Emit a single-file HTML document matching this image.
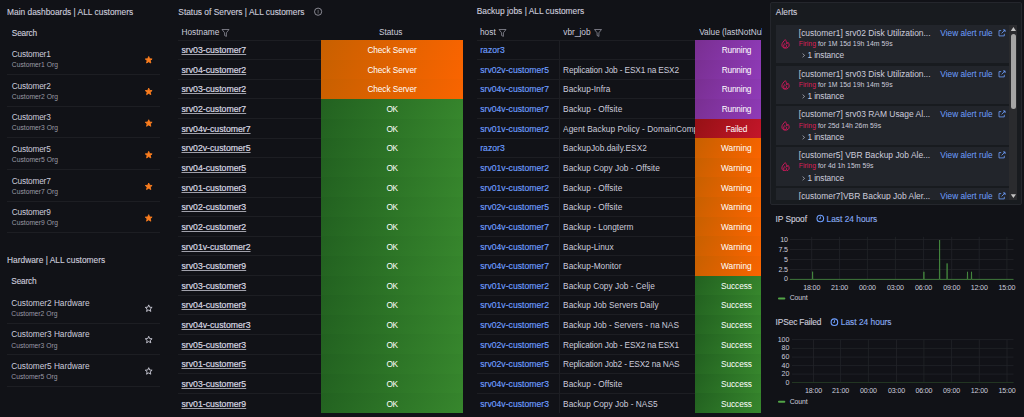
<!DOCTYPE html><html><head><meta charset="utf-8"><style>
*{margin:0;padding:0;box-sizing:border-box}
html,body{width:1024px;height:417px;overflow:hidden;background:#111217;font-family:"Liberation Sans",sans-serif;color:#ccccdc}
.a{position:absolute;white-space:nowrap}
.ttl{font-size:8.4px;line-height:10px;color:#ccccdc;-webkit-text-stroke:0.12px #ccccdc}
.hr{position:absolute;height:1px;background:#1d1e23}
.li{font-size:8.3px;letter-spacing:-0.2px;line-height:10px;color:#ccccdc}
.lo{font-size:6.75px;line-height:10px;color:#9a9aa6}
.hn{font-size:8.7px;line-height:10px;color:#d8d8e2;-webkit-text-stroke:0.2px #d8d8e2;text-decoration:underline;text-decoration-color:#a0a0aa;text-decoration-thickness:0.8px;text-underline-offset:0.5px}
.hd{font-size:8.3px;line-height:10px;color:#ccccdc}
.cell{position:absolute;color:#fff;font-size:8.3px;letter-spacing:-0.12px;line-height:10px;white-space:nowrap}
.tx{font-size:8.3px;letter-spacing:-0.18px;line-height:10px;color:#ccccdc}
.ax{font-size:7.1px;letter-spacing:-0.15px;line-height:10px;color:#ccccdc}
.lnk{color:#6e9fff}
svg.a{left:0;top:0}
</style></head><body>
<div class="a ttl" style="left:7.00px;top:6.70px;">Main dashboards | ALL customers</div>
<div class="a li" style="left:11.80px;top:28.40px;-webkit-text-stroke:0.12px #ccccdc">Search</div>
<div class="a li" style="left:11.80px;top:49.20px;">Customer1</div>
<div class="a lo" style="left:11.80px;top:60.20px;">Customer1 Org</div>
<div class="hr" style="left:7.40px;top:74.10px;width:152.20px;background:#1d1e23"></div>
<div class="a li" style="left:11.80px;top:80.83px;">Customer2</div>
<div class="a lo" style="left:11.80px;top:91.83px;">Customer2 Org</div>
<div class="hr" style="left:7.40px;top:105.73px;width:152.20px;background:#1d1e23"></div>
<div class="a li" style="left:11.80px;top:112.46px;">Customer3</div>
<div class="a lo" style="left:11.80px;top:123.46px;">Customer3 Org</div>
<div class="hr" style="left:7.40px;top:137.36px;width:152.20px;background:#1d1e23"></div>
<div class="a li" style="left:11.80px;top:144.09px;">Customer5</div>
<div class="a lo" style="left:11.80px;top:155.09px;">Customer5 Org</div>
<div class="hr" style="left:7.40px;top:168.99px;width:152.20px;background:#1d1e23"></div>
<div class="a li" style="left:11.80px;top:175.72px;">Customer7</div>
<div class="a lo" style="left:11.80px;top:186.72px;">Customer7 Org</div>
<div class="hr" style="left:7.40px;top:200.62px;width:152.20px;background:#1d1e23"></div>
<div class="a li" style="left:11.80px;top:207.35px;">Customer9</div>
<div class="a lo" style="left:11.80px;top:218.35px;">Customer9 Org</div>
<div class="hr" style="left:7.40px;top:232.25px;width:152.20px;background:#1d1e23"></div>
<div class="a ttl" style="left:7.00px;top:254.70px;">Hardware | ALL customers</div>
<div class="a li" style="left:11.30px;top:276.40px;-webkit-text-stroke:0.12px #ccccdc">Search</div>
<div class="a li" style="left:11.30px;top:297.90px;letter-spacing:-0.03px">Customer2 Hardware</div>
<div class="a lo" style="left:11.30px;top:309.10px;">Customer2 Org</div>
<div class="hr" style="left:7.40px;top:323.00px;width:152.20px;background:#1d1e23"></div>
<div class="a li" style="left:11.30px;top:329.30px;letter-spacing:-0.03px">Customer3 Hardware</div>
<div class="a lo" style="left:11.30px;top:340.50px;">Customer3 Org</div>
<div class="hr" style="left:7.40px;top:354.40px;width:152.20px;background:#1d1e23"></div>
<div class="a li" style="left:11.30px;top:360.70px;letter-spacing:-0.03px">Customer5 Hardware</div>
<div class="a lo" style="left:11.30px;top:371.90px;">Customer5 Org</div>
<div class="hr" style="left:7.40px;top:385.80px;width:152.20px;background:#1d1e23"></div>
<div class="a ttl" style="left:178.30px;top:6.60px;">Status of Servers | ALL customers</div>
<div class="a hd" style="left:181.50px;top:27.20px;">Hostname</div>
<div class="a hd" style="left:378.90px;top:27.20px;">Status</div>
<div class="hr" style="left:178.00px;top:39.50px;width:143.00px;background:#1d1e23"></div>
<div class="a hn" style="left:181.50px;top:45.22px;">srv03-customer7</div>
<div class="a" style="left:321px;top:40.00px;width:142px;height:19.68px;background:linear-gradient(120deg,#c76000,#fa6400)"></div>
<div class="cell" style="left:321px;width:142px;text-align:center;top:45.22px;letter-spacing:-0.09px">Check Server</div>
<div class="a hn" style="left:181.50px;top:64.85px;">srv04-customer2</div>
<div class="hr" style="left:178.00px;top:59.13px;width:143.00px;background:#1d1e23"></div>
<div class="a" style="left:321px;top:59.63px;width:142px;height:19.68px;background:linear-gradient(120deg,#c76000,#fa6400)"></div>
<div class="cell" style="left:321px;width:142px;text-align:center;top:64.85px;letter-spacing:-0.09px">Check Server</div>
<div class="a hn" style="left:181.50px;top:84.48px;">srv03-customer2</div>
<div class="hr" style="left:178.00px;top:78.76px;width:143.00px;background:#1d1e23"></div>
<div class="a" style="left:321px;top:79.26px;width:142px;height:19.68px;background:linear-gradient(120deg,#c76000,#fa6400)"></div>
<div class="cell" style="left:321px;width:142px;text-align:center;top:84.48px;letter-spacing:-0.09px">Check Server</div>
<div class="a hn" style="left:181.50px;top:104.11px;">srv02-customer7</div>
<div class="hr" style="left:178.00px;top:98.39px;width:143.00px;background:#1d1e23"></div>
<div class="a" style="left:321px;top:98.89px;width:142px;height:19.68px;background:linear-gradient(120deg,#226120,#37872d)"></div>
<div class="cell" style="left:321px;width:142px;text-align:center;top:104.11px;letter-spacing:-0.55px">OK</div>
<div class="a hn" style="left:181.50px;top:123.74px;">srv04v-customer7</div>
<div class="hr" style="left:178.00px;top:118.03px;width:143.00px;background:#1d1e23"></div>
<div class="a" style="left:321px;top:118.53px;width:142px;height:19.68px;background:linear-gradient(120deg,#226120,#37872d)"></div>
<div class="cell" style="left:321px;width:142px;text-align:center;top:123.74px;letter-spacing:-0.55px">OK</div>
<div class="a hn" style="left:181.50px;top:143.37px;">srv02v-customer5</div>
<div class="hr" style="left:178.00px;top:137.66px;width:143.00px;background:#1d1e23"></div>
<div class="a" style="left:321px;top:138.16px;width:142px;height:19.68px;background:linear-gradient(120deg,#226120,#37872d)"></div>
<div class="cell" style="left:321px;width:142px;text-align:center;top:143.37px;letter-spacing:-0.55px">OK</div>
<div class="a hn" style="left:181.50px;top:163.01px;">srv04-customer5</div>
<div class="hr" style="left:178.00px;top:157.29px;width:143.00px;background:#1d1e23"></div>
<div class="a" style="left:321px;top:157.79px;width:142px;height:19.68px;background:linear-gradient(120deg,#226120,#37872d)"></div>
<div class="cell" style="left:321px;width:142px;text-align:center;top:163.01px;letter-spacing:-0.55px">OK</div>
<div class="a hn" style="left:181.50px;top:182.64px;">srv01-customer3</div>
<div class="hr" style="left:178.00px;top:176.92px;width:143.00px;background:#1d1e23"></div>
<div class="a" style="left:321px;top:177.42px;width:142px;height:19.68px;background:linear-gradient(120deg,#226120,#37872d)"></div>
<div class="cell" style="left:321px;width:142px;text-align:center;top:182.64px;letter-spacing:-0.55px">OK</div>
<div class="a hn" style="left:181.50px;top:202.27px;">srv02-customer3</div>
<div class="hr" style="left:178.00px;top:196.55px;width:143.00px;background:#1d1e23"></div>
<div class="a" style="left:321px;top:197.05px;width:142px;height:19.68px;background:linear-gradient(120deg,#226120,#37872d)"></div>
<div class="cell" style="left:321px;width:142px;text-align:center;top:202.27px;letter-spacing:-0.55px">OK</div>
<div class="a hn" style="left:181.50px;top:221.90px;">srv02-customer2</div>
<div class="hr" style="left:178.00px;top:216.18px;width:143.00px;background:#1d1e23"></div>
<div class="a" style="left:321px;top:216.68px;width:142px;height:19.68px;background:linear-gradient(120deg,#226120,#37872d)"></div>
<div class="cell" style="left:321px;width:142px;text-align:center;top:221.90px;letter-spacing:-0.55px">OK</div>
<div class="a hn" style="left:181.50px;top:241.53px;">srv01v-customer2</div>
<div class="hr" style="left:178.00px;top:235.82px;width:143.00px;background:#1d1e23"></div>
<div class="a" style="left:321px;top:236.32px;width:142px;height:19.68px;background:linear-gradient(120deg,#226120,#37872d)"></div>
<div class="cell" style="left:321px;width:142px;text-align:center;top:241.53px;letter-spacing:-0.55px">OK</div>
<div class="a hn" style="left:181.50px;top:261.16px;">srv03-customer9</div>
<div class="hr" style="left:178.00px;top:255.45px;width:143.00px;background:#1d1e23"></div>
<div class="a" style="left:321px;top:255.95px;width:142px;height:19.68px;background:linear-gradient(120deg,#226120,#37872d)"></div>
<div class="cell" style="left:321px;width:142px;text-align:center;top:261.16px;letter-spacing:-0.55px">OK</div>
<div class="a hn" style="left:181.50px;top:280.79px;">srv03-customer3</div>
<div class="hr" style="left:178.00px;top:275.08px;width:143.00px;background:#1d1e23"></div>
<div class="a" style="left:321px;top:275.58px;width:142px;height:19.68px;background:linear-gradient(120deg,#226120,#37872d)"></div>
<div class="cell" style="left:321px;width:142px;text-align:center;top:280.79px;letter-spacing:-0.55px">OK</div>
<div class="a hn" style="left:181.50px;top:300.43px;">srv04-customer9</div>
<div class="hr" style="left:178.00px;top:294.71px;width:143.00px;background:#1d1e23"></div>
<div class="a" style="left:321px;top:295.21px;width:142px;height:19.68px;background:linear-gradient(120deg,#226120,#37872d)"></div>
<div class="cell" style="left:321px;width:142px;text-align:center;top:300.43px;letter-spacing:-0.55px">OK</div>
<div class="a hn" style="left:181.50px;top:320.06px;">srv04v-customer3</div>
<div class="hr" style="left:178.00px;top:314.34px;width:143.00px;background:#1d1e23"></div>
<div class="a" style="left:321px;top:314.84px;width:142px;height:19.68px;background:linear-gradient(120deg,#226120,#37872d)"></div>
<div class="cell" style="left:321px;width:142px;text-align:center;top:320.06px;letter-spacing:-0.55px">OK</div>
<div class="a hn" style="left:181.50px;top:339.69px;">srv05-customer3</div>
<div class="hr" style="left:178.00px;top:333.97px;width:143.00px;background:#1d1e23"></div>
<div class="a" style="left:321px;top:334.47px;width:142px;height:19.68px;background:linear-gradient(120deg,#226120,#37872d)"></div>
<div class="cell" style="left:321px;width:142px;text-align:center;top:339.69px;letter-spacing:-0.55px">OK</div>
<div class="a hn" style="left:181.50px;top:359.32px;">srv01-customer5</div>
<div class="hr" style="left:178.00px;top:353.61px;width:143.00px;background:#1d1e23"></div>
<div class="a" style="left:321px;top:354.11px;width:142px;height:19.68px;background:linear-gradient(120deg,#226120,#37872d)"></div>
<div class="cell" style="left:321px;width:142px;text-align:center;top:359.32px;letter-spacing:-0.55px">OK</div>
<div class="a hn" style="left:181.50px;top:378.95px;">srv03-customer5</div>
<div class="hr" style="left:178.00px;top:373.24px;width:143.00px;background:#1d1e23"></div>
<div class="a" style="left:321px;top:373.74px;width:142px;height:19.68px;background:linear-gradient(120deg,#226120,#37872d)"></div>
<div class="cell" style="left:321px;width:142px;text-align:center;top:378.95px;letter-spacing:-0.55px">OK</div>
<div class="a hn" style="left:181.50px;top:398.58px;">srv01-customer9</div>
<div class="hr" style="left:178.00px;top:392.87px;width:143.00px;background:#1d1e23"></div>
<div class="a" style="left:321px;top:393.37px;width:142px;height:19.68px;background:linear-gradient(120deg,#226120,#37872d)"></div>
<div class="cell" style="left:321px;width:142px;text-align:center;top:398.58px;letter-spacing:-0.55px">OK</div>
<div class="a ttl" style="left:476.70px;top:6.40px;">Backup jobs | ALL customers</div>
<div class="a hd" style="left:480.00px;top:27.20px;">host</div>
<div class="a hd" style="left:563.30px;top:27.20px;">vbr_job</div>
<div class="a hd" style="left:699.2px;top:27.2px;width:62.8px;overflow:hidden">Value (lastNotNull)</div>
<div class="hr" style="left:476.60px;top:39.50px;width:218.70px;background:#1d1e23"></div>
<div class="a" style="left:559px;top:40.4px;width:1px;height:372.60px;background:#1d1e23"></div>
<div class="a tx lnk" style="left:480.20px;top:45.22px;font-size:8.6px;letter-spacing:0.03px;-webkit-text-stroke:0.15px #6e9fff">razor3</div>
<div class="a tx" style="left:563.1px;top:45.22px;width:132.2px;overflow:hidden;letter-spacing:0.02px"></div>
<div class="a" style="left:695.3px;top:40.00px;width:66.2px;height:19.68px;background:linear-gradient(120deg,#792f91,#8f3bb8)"></div>
<div class="cell" style="left:706.50px;width:60px;text-align:center;top:45.22px;letter-spacing:-0.2px">Running</div>
<div class="a tx lnk" style="left:480.20px;top:64.85px;font-size:8.6px;letter-spacing:0.03px;-webkit-text-stroke:0.15px #6e9fff">srv02v-customer5</div>
<div class="a tx" style="left:563.1px;top:64.85px;width:132.2px;overflow:hidden;letter-spacing:-0.15px">Replication Job - ESX1 na ESX2</div>
<div class="hr" style="left:476.60px;top:59.13px;width:218.70px;background:#1d1e23"></div>
<div class="a" style="left:695.3px;top:59.63px;width:66.2px;height:19.68px;background:linear-gradient(120deg,#792f91,#8f3bb8)"></div>
<div class="cell" style="left:706.50px;width:60px;text-align:center;top:64.85px;letter-spacing:-0.2px">Running</div>
<div class="a tx lnk" style="left:480.20px;top:84.48px;font-size:8.6px;letter-spacing:0.03px;-webkit-text-stroke:0.15px #6e9fff">srv04v-customer7</div>
<div class="a tx" style="left:563.1px;top:84.48px;width:132.2px;overflow:hidden;letter-spacing:0.02px">Backup-Infra</div>
<div class="hr" style="left:476.60px;top:78.76px;width:218.70px;background:#1d1e23"></div>
<div class="a" style="left:695.3px;top:79.26px;width:66.2px;height:19.68px;background:linear-gradient(120deg,#792f91,#8f3bb8)"></div>
<div class="cell" style="left:706.50px;width:60px;text-align:center;top:84.48px;letter-spacing:-0.2px">Running</div>
<div class="a tx lnk" style="left:480.20px;top:104.11px;font-size:8.6px;letter-spacing:0.03px;-webkit-text-stroke:0.15px #6e9fff">srv04v-customer7</div>
<div class="a tx" style="left:563.1px;top:104.11px;width:132.2px;overflow:hidden;letter-spacing:0.02px">Backup - Offsite</div>
<div class="hr" style="left:476.60px;top:98.39px;width:218.70px;background:#1d1e23"></div>
<div class="a" style="left:695.3px;top:98.89px;width:66.2px;height:19.68px;background:linear-gradient(120deg,#792f91,#8f3bb8)"></div>
<div class="cell" style="left:706.50px;width:60px;text-align:center;top:104.11px;letter-spacing:-0.2px">Running</div>
<div class="a tx lnk" style="left:480.20px;top:123.74px;font-size:8.6px;letter-spacing:0.03px;-webkit-text-stroke:0.15px #6e9fff">srv01v-customer2</div>
<div class="a tx" style="left:563.1px;top:123.74px;width:132.2px;overflow:hidden;letter-spacing:0.03px">Agent Backup Policy - DomainComputers</div>
<div class="hr" style="left:476.60px;top:118.03px;width:218.70px;background:#1d1e23"></div>
<div class="a" style="left:695.3px;top:118.53px;width:66.2px;height:19.68px;background:linear-gradient(120deg,#961115,#c4162a)"></div>
<div class="cell" style="left:706.49px;width:60px;text-align:center;top:123.74px;letter-spacing:-0.18px">Failed</div>
<div class="a tx lnk" style="left:480.20px;top:143.37px;font-size:8.6px;letter-spacing:0.03px;-webkit-text-stroke:0.15px #6e9fff">razor3</div>
<div class="a tx" style="left:563.1px;top:143.37px;width:132.2px;overflow:hidden;letter-spacing:0.02px">BackupJob.daily.ESX2</div>
<div class="hr" style="left:476.60px;top:137.66px;width:218.70px;background:#1d1e23"></div>
<div class="a" style="left:695.3px;top:138.16px;width:66.2px;height:19.68px;background:linear-gradient(120deg,#c76000,#fa6400)"></div>
<div class="cell" style="left:706.38px;width:60px;text-align:center;top:143.37px;letter-spacing:0.03px">Warning</div>
<div class="a tx lnk" style="left:480.20px;top:163.01px;font-size:8.6px;letter-spacing:0.03px;-webkit-text-stroke:0.15px #6e9fff">srv01v-customer2</div>
<div class="a tx" style="left:563.1px;top:163.01px;width:132.2px;overflow:hidden;letter-spacing:0.02px">Backup Copy Job - Offsite</div>
<div class="hr" style="left:476.60px;top:157.29px;width:218.70px;background:#1d1e23"></div>
<div class="a" style="left:695.3px;top:157.79px;width:66.2px;height:19.68px;background:linear-gradient(120deg,#c76000,#fa6400)"></div>
<div class="cell" style="left:706.38px;width:60px;text-align:center;top:163.01px;letter-spacing:0.03px">Warning</div>
<div class="a tx lnk" style="left:480.20px;top:182.64px;font-size:8.6px;letter-spacing:0.03px;-webkit-text-stroke:0.15px #6e9fff">srv01v-customer2</div>
<div class="a tx" style="left:563.1px;top:182.64px;width:132.2px;overflow:hidden;letter-spacing:0.02px">Backup - Offsite</div>
<div class="hr" style="left:476.60px;top:176.92px;width:218.70px;background:#1d1e23"></div>
<div class="a" style="left:695.3px;top:177.42px;width:66.2px;height:19.68px;background:linear-gradient(120deg,#c76000,#fa6400)"></div>
<div class="cell" style="left:706.38px;width:60px;text-align:center;top:182.64px;letter-spacing:0.03px">Warning</div>
<div class="a tx lnk" style="left:480.20px;top:202.27px;font-size:8.6px;letter-spacing:0.03px;-webkit-text-stroke:0.15px #6e9fff">srv02v-customer5</div>
<div class="a tx" style="left:563.1px;top:202.27px;width:132.2px;overflow:hidden;letter-spacing:0.02px">Backup - Offsite</div>
<div class="hr" style="left:476.60px;top:196.55px;width:218.70px;background:#1d1e23"></div>
<div class="a" style="left:695.3px;top:197.05px;width:66.2px;height:19.68px;background:linear-gradient(120deg,#c76000,#fa6400)"></div>
<div class="cell" style="left:706.38px;width:60px;text-align:center;top:202.27px;letter-spacing:0.03px">Warning</div>
<div class="a tx lnk" style="left:480.20px;top:221.90px;font-size:8.6px;letter-spacing:0.03px;-webkit-text-stroke:0.15px #6e9fff">srv04v-customer7</div>
<div class="a tx" style="left:563.1px;top:221.90px;width:132.2px;overflow:hidden;letter-spacing:0.02px">Backup - Longterm</div>
<div class="hr" style="left:476.60px;top:216.18px;width:218.70px;background:#1d1e23"></div>
<div class="a" style="left:695.3px;top:216.68px;width:66.2px;height:19.68px;background:linear-gradient(120deg,#c76000,#fa6400)"></div>
<div class="cell" style="left:706.38px;width:60px;text-align:center;top:221.90px;letter-spacing:0.03px">Warning</div>
<div class="a tx lnk" style="left:480.20px;top:241.53px;font-size:8.6px;letter-spacing:0.03px;-webkit-text-stroke:0.15px #6e9fff">srv04v-customer7</div>
<div class="a tx" style="left:563.1px;top:241.53px;width:132.2px;overflow:hidden;letter-spacing:0.02px">Backup-Linux</div>
<div class="hr" style="left:476.60px;top:235.82px;width:218.70px;background:#1d1e23"></div>
<div class="a" style="left:695.3px;top:236.32px;width:66.2px;height:19.68px;background:linear-gradient(120deg,#c76000,#fa6400)"></div>
<div class="cell" style="left:706.38px;width:60px;text-align:center;top:241.53px;letter-spacing:0.03px">Warning</div>
<div class="a tx lnk" style="left:480.20px;top:261.16px;font-size:8.6px;letter-spacing:0.03px;-webkit-text-stroke:0.15px #6e9fff">srv04v-customer7</div>
<div class="a tx" style="left:563.1px;top:261.16px;width:132.2px;overflow:hidden;letter-spacing:0.02px">Backup-Monitor</div>
<div class="hr" style="left:476.60px;top:255.45px;width:218.70px;background:#1d1e23"></div>
<div class="a" style="left:695.3px;top:255.95px;width:66.2px;height:19.68px;background:linear-gradient(120deg,#c76000,#fa6400)"></div>
<div class="cell" style="left:706.38px;width:60px;text-align:center;top:261.16px;letter-spacing:0.03px">Warning</div>
<div class="a tx lnk" style="left:480.20px;top:280.79px;font-size:8.6px;letter-spacing:0.03px;-webkit-text-stroke:0.15px #6e9fff">srv01v-customer2</div>
<div class="a tx" style="left:563.1px;top:280.79px;width:132.2px;overflow:hidden;letter-spacing:0.02px">Backup Copy Job - Celje</div>
<div class="hr" style="left:476.60px;top:275.08px;width:218.70px;background:#1d1e23"></div>
<div class="a" style="left:695.3px;top:275.58px;width:66.2px;height:19.68px;background:linear-gradient(120deg,#226120,#37872d)"></div>
<div class="cell" style="left:706.44px;width:60px;text-align:center;top:280.79px;letter-spacing:-0.08px">Success</div>
<div class="a tx lnk" style="left:480.20px;top:300.43px;font-size:8.6px;letter-spacing:0.03px;-webkit-text-stroke:0.15px #6e9fff">srv01v-customer2</div>
<div class="a tx" style="left:563.1px;top:300.43px;width:132.2px;overflow:hidden;letter-spacing:0.02px">Backup Job Servers Daily</div>
<div class="hr" style="left:476.60px;top:294.71px;width:218.70px;background:#1d1e23"></div>
<div class="a" style="left:695.3px;top:295.21px;width:66.2px;height:19.68px;background:linear-gradient(120deg,#226120,#37872d)"></div>
<div class="cell" style="left:706.44px;width:60px;text-align:center;top:300.43px;letter-spacing:-0.08px">Success</div>
<div class="a tx lnk" style="left:480.20px;top:320.06px;font-size:8.6px;letter-spacing:0.03px;-webkit-text-stroke:0.15px #6e9fff">srv02v-customer5</div>
<div class="a tx" style="left:563.1px;top:320.06px;width:132.2px;overflow:hidden;letter-spacing:0.02px">Backup Job - Servers - na NAS</div>
<div class="hr" style="left:476.60px;top:314.34px;width:218.70px;background:#1d1e23"></div>
<div class="a" style="left:695.3px;top:314.84px;width:66.2px;height:19.68px;background:linear-gradient(120deg,#226120,#37872d)"></div>
<div class="cell" style="left:706.44px;width:60px;text-align:center;top:320.06px;letter-spacing:-0.08px">Success</div>
<div class="a tx lnk" style="left:480.20px;top:339.69px;font-size:8.6px;letter-spacing:0.03px;-webkit-text-stroke:0.15px #6e9fff">srv02v-customer5</div>
<div class="a tx" style="left:563.1px;top:339.69px;width:132.2px;overflow:hidden;letter-spacing:-0.15px">Replication Job - ESX2 na ESX1</div>
<div class="hr" style="left:476.60px;top:333.97px;width:218.70px;background:#1d1e23"></div>
<div class="a" style="left:695.3px;top:334.47px;width:66.2px;height:19.68px;background:linear-gradient(120deg,#226120,#37872d)"></div>
<div class="cell" style="left:706.44px;width:60px;text-align:center;top:339.69px;letter-spacing:-0.08px">Success</div>
<div class="a tx lnk" style="left:480.20px;top:359.32px;font-size:8.6px;letter-spacing:0.03px;-webkit-text-stroke:0.15px #6e9fff">srv02v-customer5</div>
<div class="a tx" style="left:563.1px;top:359.32px;width:132.2px;overflow:hidden;letter-spacing:-0.15px">Replication Job2 - ESX2 na NAS</div>
<div class="hr" style="left:476.60px;top:353.61px;width:218.70px;background:#1d1e23"></div>
<div class="a" style="left:695.3px;top:354.11px;width:66.2px;height:19.68px;background:linear-gradient(120deg,#226120,#37872d)"></div>
<div class="cell" style="left:706.44px;width:60px;text-align:center;top:359.32px;letter-spacing:-0.08px">Success</div>
<div class="a tx lnk" style="left:480.20px;top:378.95px;font-size:8.6px;letter-spacing:0.03px;-webkit-text-stroke:0.15px #6e9fff">srv04v-customer3</div>
<div class="a tx" style="left:563.1px;top:378.95px;width:132.2px;overflow:hidden;letter-spacing:0.02px">Backup - Offsite</div>
<div class="hr" style="left:476.60px;top:373.24px;width:218.70px;background:#1d1e23"></div>
<div class="a" style="left:695.3px;top:373.74px;width:66.2px;height:19.68px;background:linear-gradient(120deg,#226120,#37872d)"></div>
<div class="cell" style="left:706.44px;width:60px;text-align:center;top:378.95px;letter-spacing:-0.08px">Success</div>
<div class="a tx lnk" style="left:480.20px;top:398.58px;font-size:8.6px;letter-spacing:0.03px;-webkit-text-stroke:0.15px #6e9fff">srv04v-customer3</div>
<div class="a tx" style="left:563.1px;top:398.58px;width:132.2px;overflow:hidden;letter-spacing:0.02px">Backup Copy Job - NAS5</div>
<div class="hr" style="left:476.60px;top:392.87px;width:218.70px;background:#1d1e23"></div>
<div class="a" style="left:695.3px;top:393.37px;width:66.2px;height:19.68px;background:linear-gradient(120deg,#226120,#37872d)"></div>
<div class="cell" style="left:706.44px;width:60px;text-align:center;top:398.58px;letter-spacing:-0.08px">Success</div>
<div class="a" style="left:770px;top:2.2px;width:251.5px;height:202.4px;background:#181b1f;border:1px solid #24262c;border-radius:2px"></div>
<div class="a ttl" style="left:775.80px;top:6.50px;">Alerts</div>
<div class="a" style="left:775.5px;top:24.9px;width:233.1px;height:174.7px;overflow:hidden">
<div class="a" style="left:0;top:0.00px;width:233.1px;height:38.4px;background:#22252b"></div>
<div class="a tx" style="left:23.3px;top:3.00px;font-size:8.45px;letter-spacing:0">[customer1] srv02 Disk Utilization...</div>
<div class="a tx lnk" style="left:164.8px;top:3.00px;font-size:8.3px;letter-spacing:0">View alert rule</div>
<div class="a tx" style="left:23.3px;top:14.30px;font-size:6.9px;letter-spacing:0"><span style="color:#dc1f58">Firing</span> for 1M 15d 19h 14m 59s</div>
<div class="a tx" style="left:32px;top:25.60px;font-size:8.3px;letter-spacing:-0.13px">1 instance</div>
<svg class="a" style="left:26px;top:28.50px" width="4" height="5" viewBox="0 0 4 5"><path d="M0.6 0.6 L2.6 2.4 L0.6 4.2" fill="none" stroke="#b8b8c4" stroke-width="0.75"/></svg>
<svg class="a" style="left:5.2px;top:14.60px" width="9.2" height="9.7" viewBox="0 0 9.2 9.7"><path d="M4.2 0.6 C2.8 2.2 0.9 3.9 0.9 6 C0.9 8 2.5 9.2 4.4 9.2 C6.4 9.2 8.2 8 8.2 6 C8.2 4.9 7.6 4 6.9 3.3 C6.8 4.2 6.3 4.7 5.7 4.9 C5.8 3.3 5.2 1.7 4.2 0.6 Z" fill="none" stroke="#d4175c" stroke-width="0.95" stroke-linejoin="round"/><path d="M3.6 4.6 C3 5.6 2.6 6.4 2.6 7.1 C2.6 8 3.3 8.5 4.2 8.5 C5 8.5 5.7 8 5.7 7.2 C5.7 6.6 5.3 6.1 4.9 5.8" fill="none" stroke="#d4175c" stroke-width="0.9" stroke-linecap="round"/></svg>
<svg class="a" style="left:222px;top:4.00px" width="8" height="8" viewBox="0 0 8 8"><path d="M3.2 1.6 H1 V6.9 H6.3 V4.8" fill="none" stroke="#6e9fff" stroke-width="0.8" stroke-linejoin="round"/><path d="M3.6 4.4 L7 1 M5 0.9 H7.1 V3" fill="none" stroke="#6e9fff" stroke-width="0.8"/></svg>
<div class="a" style="left:0;top:40.75px;width:233.1px;height:38.4px;background:#22252b"></div>
<div class="a tx" style="left:23.3px;top:43.75px;font-size:8.45px;letter-spacing:0">[customer1] srv03 Disk Utilization...</div>
<div class="a tx lnk" style="left:164.8px;top:43.75px;font-size:8.3px;letter-spacing:0">View alert rule</div>
<div class="a tx" style="left:23.3px;top:55.05px;font-size:6.9px;letter-spacing:0"><span style="color:#dc1f58">Firing</span> for 1M 15d 19h 14m 59s</div>
<div class="a tx" style="left:32px;top:66.35px;font-size:8.3px;letter-spacing:-0.13px">1 instance</div>
<svg class="a" style="left:26px;top:69.25px" width="4" height="5" viewBox="0 0 4 5"><path d="M0.6 0.6 L2.6 2.4 L0.6 4.2" fill="none" stroke="#b8b8c4" stroke-width="0.75"/></svg>
<svg class="a" style="left:5.2px;top:55.35px" width="9.2" height="9.7" viewBox="0 0 9.2 9.7"><path d="M4.2 0.6 C2.8 2.2 0.9 3.9 0.9 6 C0.9 8 2.5 9.2 4.4 9.2 C6.4 9.2 8.2 8 8.2 6 C8.2 4.9 7.6 4 6.9 3.3 C6.8 4.2 6.3 4.7 5.7 4.9 C5.8 3.3 5.2 1.7 4.2 0.6 Z" fill="none" stroke="#d4175c" stroke-width="0.95" stroke-linejoin="round"/><path d="M3.6 4.6 C3 5.6 2.6 6.4 2.6 7.1 C2.6 8 3.3 8.5 4.2 8.5 C5 8.5 5.7 8 5.7 7.2 C5.7 6.6 5.3 6.1 4.9 5.8" fill="none" stroke="#d4175c" stroke-width="0.9" stroke-linecap="round"/></svg>
<svg class="a" style="left:222px;top:44.75px" width="8" height="8" viewBox="0 0 8 8"><path d="M3.2 1.6 H1 V6.9 H6.3 V4.8" fill="none" stroke="#6e9fff" stroke-width="0.8" stroke-linejoin="round"/><path d="M3.6 4.4 L7 1 M5 0.9 H7.1 V3" fill="none" stroke="#6e9fff" stroke-width="0.8"/></svg>
<div class="a" style="left:0;top:81.50px;width:233.1px;height:38.4px;background:#22252b"></div>
<div class="a tx" style="left:23.3px;top:84.50px;font-size:8.45px;letter-spacing:0">[customer7] srv03 RAM Usage Al...</div>
<div class="a tx lnk" style="left:164.8px;top:84.50px;font-size:8.3px;letter-spacing:0">View alert rule</div>
<div class="a tx" style="left:23.3px;top:95.80px;font-size:6.9px;letter-spacing:0"><span style="color:#dc1f58">Firing</span> for 25d 14h 26m 59s</div>
<div class="a tx" style="left:32px;top:107.10px;font-size:8.3px;letter-spacing:-0.13px">1 instance</div>
<svg class="a" style="left:26px;top:110.00px" width="4" height="5" viewBox="0 0 4 5"><path d="M0.6 0.6 L2.6 2.4 L0.6 4.2" fill="none" stroke="#b8b8c4" stroke-width="0.75"/></svg>
<svg class="a" style="left:5.2px;top:96.10px" width="9.2" height="9.7" viewBox="0 0 9.2 9.7"><path d="M4.2 0.6 C2.8 2.2 0.9 3.9 0.9 6 C0.9 8 2.5 9.2 4.4 9.2 C6.4 9.2 8.2 8 8.2 6 C8.2 4.9 7.6 4 6.9 3.3 C6.8 4.2 6.3 4.7 5.7 4.9 C5.8 3.3 5.2 1.7 4.2 0.6 Z" fill="none" stroke="#d4175c" stroke-width="0.95" stroke-linejoin="round"/><path d="M3.6 4.6 C3 5.6 2.6 6.4 2.6 7.1 C2.6 8 3.3 8.5 4.2 8.5 C5 8.5 5.7 8 5.7 7.2 C5.7 6.6 5.3 6.1 4.9 5.8" fill="none" stroke="#d4175c" stroke-width="0.9" stroke-linecap="round"/></svg>
<svg class="a" style="left:222px;top:85.50px" width="8" height="8" viewBox="0 0 8 8"><path d="M3.2 1.6 H1 V6.9 H6.3 V4.8" fill="none" stroke="#6e9fff" stroke-width="0.8" stroke-linejoin="round"/><path d="M3.6 4.4 L7 1 M5 0.9 H7.1 V3" fill="none" stroke="#6e9fff" stroke-width="0.8"/></svg>
<div class="a" style="left:0;top:122.25px;width:233.1px;height:38.4px;background:#22252b"></div>
<div class="a tx" style="left:23.3px;top:125.25px;font-size:8.45px;letter-spacing:0">[customer5] VBR Backup Job Ale...</div>
<div class="a tx lnk" style="left:164.8px;top:125.25px;font-size:8.3px;letter-spacing:0">View alert rule</div>
<div class="a tx" style="left:23.3px;top:136.55px;font-size:6.9px;letter-spacing:0"><span style="color:#dc1f58">Firing</span> for 4d 1h 15m 59s</div>
<div class="a tx" style="left:32px;top:147.85px;font-size:8.3px;letter-spacing:-0.13px">1 instance</div>
<svg class="a" style="left:26px;top:150.75px" width="4" height="5" viewBox="0 0 4 5"><path d="M0.6 0.6 L2.6 2.4 L0.6 4.2" fill="none" stroke="#b8b8c4" stroke-width="0.75"/></svg>
<svg class="a" style="left:5.2px;top:136.85px" width="9.2" height="9.7" viewBox="0 0 9.2 9.7"><path d="M4.2 0.6 C2.8 2.2 0.9 3.9 0.9 6 C0.9 8 2.5 9.2 4.4 9.2 C6.4 9.2 8.2 8 8.2 6 C8.2 4.9 7.6 4 6.9 3.3 C6.8 4.2 6.3 4.7 5.7 4.9 C5.8 3.3 5.2 1.7 4.2 0.6 Z" fill="none" stroke="#d4175c" stroke-width="0.95" stroke-linejoin="round"/><path d="M3.6 4.6 C3 5.6 2.6 6.4 2.6 7.1 C2.6 8 3.3 8.5 4.2 8.5 C5 8.5 5.7 8 5.7 7.2 C5.7 6.6 5.3 6.1 4.9 5.8" fill="none" stroke="#d4175c" stroke-width="0.9" stroke-linecap="round"/></svg>
<svg class="a" style="left:222px;top:126.25px" width="8" height="8" viewBox="0 0 8 8"><path d="M3.2 1.6 H1 V6.9 H6.3 V4.8" fill="none" stroke="#6e9fff" stroke-width="0.8" stroke-linejoin="round"/><path d="M3.6 4.4 L7 1 M5 0.9 H7.1 V3" fill="none" stroke="#6e9fff" stroke-width="0.8"/></svg>
<div class="a" style="left:0;top:163.00px;width:233.1px;height:38.4px;background:#22252b"></div>
<div class="a tx" style="left:23.3px;top:166.00px;font-size:8.45px;letter-spacing:0">[customer7]VBR Backup Job Aler...</div>
<div class="a tx lnk" style="left:164.8px;top:166.00px;font-size:8.3px;letter-spacing:0">View alert rule</div>
<div class="a tx" style="left:23.3px;top:177.30px;font-size:6.9px;letter-spacing:0"><span style="color:#dc1f58">Firing</span> for 4d 1h 15m 59s</div>
<div class="a tx" style="left:32px;top:188.60px;font-size:8.3px;letter-spacing:-0.13px">1 instance</div>
<svg class="a" style="left:26px;top:191.50px" width="4" height="5" viewBox="0 0 4 5"><path d="M0.6 0.6 L2.6 2.4 L0.6 4.2" fill="none" stroke="#b8b8c4" stroke-width="0.75"/></svg>
<svg class="a" style="left:5.2px;top:177.60px" width="9.2" height="9.7" viewBox="0 0 9.2 9.7"><path d="M4.2 0.6 C2.8 2.2 0.9 3.9 0.9 6 C0.9 8 2.5 9.2 4.4 9.2 C6.4 9.2 8.2 8 8.2 6 C8.2 4.9 7.6 4 6.9 3.3 C6.8 4.2 6.3 4.7 5.7 4.9 C5.8 3.3 5.2 1.7 4.2 0.6 Z" fill="none" stroke="#d4175c" stroke-width="0.95" stroke-linejoin="round"/><path d="M3.6 4.6 C3 5.6 2.6 6.4 2.6 7.1 C2.6 8 3.3 8.5 4.2 8.5 C5 8.5 5.7 8 5.7 7.2 C5.7 6.6 5.3 6.1 4.9 5.8" fill="none" stroke="#d4175c" stroke-width="0.9" stroke-linecap="round"/></svg>
<svg class="a" style="left:222px;top:167.00px" width="8" height="8" viewBox="0 0 8 8"><path d="M3.2 1.6 H1 V6.9 H6.3 V4.8" fill="none" stroke="#6e9fff" stroke-width="0.8" stroke-linejoin="round"/><path d="M3.6 4.4 L7 1 M5 0.9 H7.1 V3" fill="none" stroke="#6e9fff" stroke-width="0.8"/></svg>
</div>
<div class="a" style="left:1008.8px;top:24.9px;width:8.4px;height:174.7px;background:#2a2b2e"></div>
<div class="a" style="left:1010.8px;top:33.9px;width:5.1px;height:74.8px;background:#a4a4a4;border-radius:2.5px"></div>
<div class="a ttl" style="left:775.60px;top:213.60px;letter-spacing:-0.08px">IP Spoof</div>
<div class="a ttl lnk" style="left:826.50px;top:213.60px;">Last 24 hours</div>
<div class="a ax" style="left:747.80px;width:40px;text-align:right;top:234.50px">10</div>
<div class="a ax" style="left:747.80px;width:40px;text-align:right;top:244.50px">7.5</div>
<div class="a ax" style="left:747.80px;width:40px;text-align:right;top:254.50px">5</div>
<div class="a ax" style="left:747.80px;width:40px;text-align:right;top:264.50px">2.5</div>
<div class="a ax" style="left:747.80px;width:40px;text-align:right;top:274.40px">0</div>
<div class="a ax" style="left:791.70px;width:40px;text-align:center;top:282.90px">18:00</div>
<div class="a ax" style="left:819.60px;width:40px;text-align:center;top:282.90px">21:00</div>
<div class="a ax" style="left:847.40px;width:40px;text-align:center;top:282.90px">00:00</div>
<div class="a ax" style="left:875.40px;width:40px;text-align:center;top:282.90px">03:00</div>
<div class="a ax" style="left:903.60px;width:40px;text-align:center;top:282.90px">06:00</div>
<div class="a ax" style="left:931.70px;width:40px;text-align:center;top:282.90px">09:00</div>
<div class="a ax" style="left:959.20px;width:40px;text-align:center;top:282.90px">12:00</div>
<div class="a ax" style="left:986.90px;width:40px;text-align:center;top:282.90px">15:00</div>
<div class="a ax" style="left:789.80px;top:293.20px;font-size:6.9px">Count</div>
<div class="a ttl" style="left:775.60px;top:317.30px;letter-spacing:-0.15px">IPSec Failed</div>
<div class="a ttl lnk" style="left:840.80px;top:317.30px;">Last 24 hours</div>
<div class="a ax" style="left:749.20px;width:40px;text-align:right;top:334.60px">100</div>
<div class="a ax" style="left:749.20px;width:40px;text-align:right;top:343.40px">80</div>
<div class="a ax" style="left:749.20px;width:40px;text-align:right;top:352.10px">60</div>
<div class="a ax" style="left:749.20px;width:40px;text-align:right;top:360.60px">40</div>
<div class="a ax" style="left:749.20px;width:40px;text-align:right;top:369.10px">20</div>
<div class="a ax" style="left:749.20px;width:40px;text-align:right;top:377.50px">0</div>
<div class="a ax" style="left:793.50px;width:40px;text-align:center;top:386.30px">18:00</div>
<div class="a ax" style="left:820.60px;width:40px;text-align:center;top:386.30px">21:00</div>
<div class="a ax" style="left:848.40px;width:40px;text-align:center;top:386.30px">00:00</div>
<div class="a ax" style="left:876.50px;width:40px;text-align:center;top:386.30px">03:00</div>
<div class="a ax" style="left:903.90px;width:40px;text-align:center;top:386.30px">06:00</div>
<div class="a ax" style="left:931.60px;width:40px;text-align:center;top:386.30px">09:00</div>
<div class="a ax" style="left:959.30px;width:40px;text-align:center;top:386.30px">12:00</div>
<div class="a ax" style="left:987.00px;width:40px;text-align:center;top:386.30px">15:00</div>
<div class="a ax" style="left:789.80px;top:396.50px;font-size:6.9px">Count</div>
<svg class="a" width="1024" height="417"><polygon points="148.70,56.50 149.65,58.79 152.12,58.99 150.24,60.60 150.82,63.01 148.70,61.72 146.58,63.01 147.16,60.60 145.28,58.99 147.75,58.79" fill="#fa7d1e" stroke="#fa7d1e" stroke-width="0.9" stroke-linejoin="round"/><polygon points="148.70,88.13 149.65,90.42 152.12,90.62 150.24,92.23 150.82,94.64 148.70,93.35 146.58,94.64 147.16,92.23 145.28,90.62 147.75,90.42" fill="#fa7d1e" stroke="#fa7d1e" stroke-width="0.9" stroke-linejoin="round"/><polygon points="148.70,119.76 149.65,122.05 152.12,122.25 150.24,123.86 150.82,126.27 148.70,124.98 146.58,126.27 147.16,123.86 145.28,122.25 147.75,122.05" fill="#fa7d1e" stroke="#fa7d1e" stroke-width="0.9" stroke-linejoin="round"/><polygon points="148.70,151.39 149.65,153.68 152.12,153.88 150.24,155.49 150.82,157.90 148.70,156.61 146.58,157.90 147.16,155.49 145.28,153.88 147.75,153.68" fill="#fa7d1e" stroke="#fa7d1e" stroke-width="0.9" stroke-linejoin="round"/><polygon points="148.70,183.02 149.65,185.31 152.12,185.51 150.24,187.12 150.82,189.53 148.70,188.24 146.58,189.53 147.16,187.12 145.28,185.51 147.75,185.31" fill="#fa7d1e" stroke="#fa7d1e" stroke-width="0.9" stroke-linejoin="round"/><polygon points="148.70,214.65 149.65,216.94 152.12,217.14 150.24,218.75 150.82,221.16 148.70,219.87 146.58,221.16 147.16,218.75 145.28,217.14 147.75,216.94" fill="#fa7d1e" stroke="#fa7d1e" stroke-width="0.9" stroke-linejoin="round"/><polygon points="148.70,304.90 149.65,307.19 152.12,307.39 150.24,309.00 150.82,311.41 148.70,310.12 146.58,311.41 147.16,309.00 145.28,307.39 147.75,307.19" fill="none" stroke="#c8c8d4" stroke-width="0.95" stroke-linejoin="round"/><polygon points="148.70,336.30 149.65,338.59 152.12,338.79 150.24,340.40 150.82,342.81 148.70,341.52 146.58,342.81 147.16,340.40 145.28,338.79 147.75,338.59" fill="none" stroke="#c8c8d4" stroke-width="0.95" stroke-linejoin="round"/><polygon points="148.70,367.70 149.65,369.99 152.12,370.19 150.24,371.80 150.82,374.21 148.70,372.92 146.58,374.21 147.16,371.80 145.28,370.19 147.75,369.99" fill="none" stroke="#c8c8d4" stroke-width="0.95" stroke-linejoin="round"/><circle cx="318.1" cy="11.7" r="3.6" fill="none" stroke="#a6a6b0" stroke-width="0.8"/><rect x="317.7" y="9.9" width="0.8" height="3.6" fill="#77777f"/><path d="M222.00 29.50 h7 l-2.6 3.3 v3.6 l-1.8 -0.9 v-2.7 z" fill="none" stroke="#8e8e99" stroke-width="0.8" stroke-linejoin="round"/><path d="M499.00 29.50 h7 l-2.6 3.3 v3.6 l-1.8 -0.9 v-2.7 z" fill="none" stroke="#8e8e99" stroke-width="0.8" stroke-linejoin="round"/><path d="M594.50 29.50 h7 l-2.6 3.3 v3.6 l-1.8 -0.9 v-2.7 z" fill="none" stroke="#8e8e99" stroke-width="0.8" stroke-linejoin="round"/><polygon points="1010.8,30.9 1013.4,27.1 1016,30.9" fill="#c3c3c3"/><polygon points="1010.8,194.3 1013.4,197.9 1016,194.3" fill="#c3c3c3"/><circle cx="820.3000000000001" cy="218.5" r="3.3" fill="none" stroke="#6e9fff" stroke-width="1.1"/><path d="M820.40 216.50 L820.40 218.70 L819.00 218.70" stroke="#6e9fff" stroke-width="0.9" fill="none"/><line x1="789.8" y1="239.50" x2="1013.5" y2="239.50" stroke="#222328" stroke-width="0.8"/><line x1="789.8" y1="249.50" x2="1013.5" y2="249.50" stroke="#222328" stroke-width="0.8"/><line x1="789.8" y1="259.50" x2="1013.5" y2="259.50" stroke="#222328" stroke-width="0.8"/><line x1="789.8" y1="269.50" x2="1013.5" y2="269.50" stroke="#222328" stroke-width="0.8"/><line x1="789.8" y1="279.40" x2="1013.5" y2="279.40" stroke="#222328" stroke-width="0.8"/><line x1="811.70" y1="236.8" x2="811.70" y2="279.40" stroke="#222328" stroke-width="0.8"/><line x1="839.60" y1="236.8" x2="839.60" y2="279.40" stroke="#222328" stroke-width="0.8"/><line x1="867.40" y1="236.8" x2="867.40" y2="279.40" stroke="#222328" stroke-width="0.8"/><line x1="895.40" y1="236.8" x2="895.40" y2="279.40" stroke="#222328" stroke-width="0.8"/><line x1="923.60" y1="236.8" x2="923.60" y2="279.40" stroke="#222328" stroke-width="0.8"/><line x1="951.70" y1="236.8" x2="951.70" y2="279.40" stroke="#222328" stroke-width="0.8"/><line x1="979.20" y1="236.8" x2="979.20" y2="279.40" stroke="#222328" stroke-width="0.8"/><line x1="1006.90" y1="236.8" x2="1006.90" y2="279.40" stroke="#222328" stroke-width="0.8"/><path d="M789.8 279.40 L812.40 279.40 L812.60 271.70 L812.80 279.40 L923.70 279.40 L923.90 271.80 L924.10 279.40 L939.40 279.40 L939.60 240.00 L939.80 279.40 L946.90 279.40 L947.10 263.40 L947.30 279.40 L967.30 279.40 L967.50 271.80 L967.70 279.40 L971.30 279.40 L971.50 271.80 L971.70 279.40 L1013.5 279.40" fill="none" stroke="#4a9341" stroke-width="0.75" stroke-linejoin="bevel"/><line x1="779" y1="298.5" x2="784.3" y2="298.5" stroke="#52a447" stroke-width="2.1" stroke-linecap="round"/><circle cx="834.4000000000001" cy="322.2" r="3.3" fill="none" stroke="#6e9fff" stroke-width="1.1"/><path d="M834.50 320.20 L834.50 322.40 L833.10 322.40" stroke="#6e9fff" stroke-width="0.9" fill="none"/><line x1="792" y1="339.60" x2="1013.5" y2="339.60" stroke="#222328" stroke-width="0.8"/><line x1="792" y1="348.40" x2="1013.5" y2="348.40" stroke="#222328" stroke-width="0.8"/><line x1="792" y1="357.10" x2="1013.5" y2="357.10" stroke="#222328" stroke-width="0.8"/><line x1="792" y1="365.60" x2="1013.5" y2="365.60" stroke="#222328" stroke-width="0.8"/><line x1="792" y1="374.10" x2="1013.5" y2="374.10" stroke="#222328" stroke-width="0.8"/><line x1="792" y1="382.50" x2="1013.5" y2="382.50" stroke="#222328" stroke-width="0.8"/><line x1="813.50" y1="339.6" x2="813.50" y2="382.50" stroke="#222328" stroke-width="0.8"/><line x1="840.60" y1="339.6" x2="840.60" y2="382.50" stroke="#222328" stroke-width="0.8"/><line x1="868.40" y1="339.6" x2="868.40" y2="382.50" stroke="#222328" stroke-width="0.8"/><line x1="896.50" y1="339.6" x2="896.50" y2="382.50" stroke="#222328" stroke-width="0.8"/><line x1="923.90" y1="339.6" x2="923.90" y2="382.50" stroke="#222328" stroke-width="0.8"/><line x1="951.60" y1="339.6" x2="951.60" y2="382.50" stroke="#222328" stroke-width="0.8"/><line x1="979.30" y1="339.6" x2="979.30" y2="382.50" stroke="#222328" stroke-width="0.8"/><line x1="1007.00" y1="339.6" x2="1007.00" y2="382.50" stroke="#222328" stroke-width="0.8"/><path d="M792 382.50 L1013.5 382.50" fill="none" stroke="#243d22" stroke-width="0.75" stroke-linejoin="bevel"/><line x1="779" y1="401.8" x2="784.3" y2="401.8" stroke="#52a447" stroke-width="2.1" stroke-linecap="round"/></svg>
</body></html>
